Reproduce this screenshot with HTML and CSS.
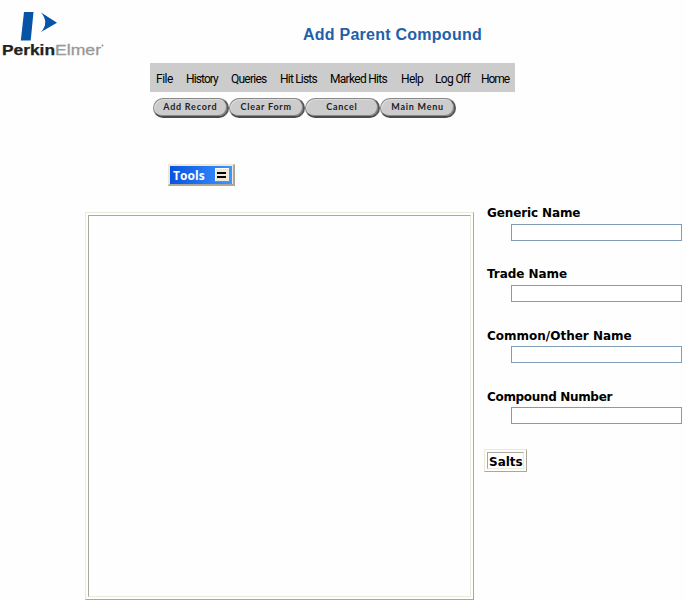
FILE: index.html
```html
<!DOCTYPE html>
<html lang="en">
<head>
<meta charset="utf-8">
<title>Add Parent Compound</title>
<link rel="stylesheet" href="styles.css">
</head>
<body>
<header class="header">
  <svg class="logo" width="110" height="62" viewBox="0 0 110 62" role="img" aria-label="PerkinElmer">
    <path d="M24 12H33.5L30.7 40.5H20.8Z" fill="#0754a6"/>
    <path d="M41 12.5L57 22.8L41 32Q49.5 22.5 41 12.5Z" fill="#0754a6"/>
    <text class="logo-name" x="2" y="54.5" textLength="53" lengthAdjust="spacingAndGlyphs">Perkin</text>
    <text class="logo-name logo-light" x="55" y="54.5" textLength="46" lengthAdjust="spacingAndGlyphs">Elmer</text>
    <circle cx="102.5" cy="45.5" r=".9" fill="#888"/>
  </svg>
  <h1 class="title">Add Parent Compound</h1>
</header>
<nav class="menu">
  <a class="w-file">File</a><a class="w-history">History</a><a class="w-queries">Queries</a><a class="w-lists">Hit Lists</a><a class="w-marked">Marked Hits</a><a class="w-help">Help</a><a class="w-log">Log Off</a><a class="w-home">Home</a>
</nav>
<div class="actions">
  <button>Add Record</button><button>Clear Form</button><button>Cancel</button><button>Main Menu</button>
</div>
<div class="tools"><span class="tools-face"><span class="tools-label">Tools</span><svg class="tools-icon" width="16" height="14" viewBox="0 0 16 14" shape-rendering="crispEdges"><path d="M0 0H15V14H0Z" fill="#8d897a"/><path d="M0 0H14V13H0Z" fill="#fff"/><path d="M1 1H14V13H1Z" fill="#ece9d8"/><path d="M2 4H11V6H2ZM2 8H11V10H2Z" fill="#000"/></svg></span></div>
<main class="content">
  <div class="frame structure"><div class="frame-inner"></div></div>
  <form class="fields">
    <label class="field generic"><span>Generic Name</span><input type="text"></label>
    <label class="field trade"><span>Trade Name</span><input type="text"></label>
    <label class="field common"><span>Common/Other Name</span><input type="text"></label>
    <label class="field number"><span>Compound Number</span><input type="text"></label>
    <div class="frame salts"><div class="frame-inner">Salts</div></div>
  </form>
</main>
</body>
</html>
```
FILE: styles.css
```css
* { box-sizing: border-box; }
body { margin: 0; height: 601px; overflow: hidden; background: #fefefe; color: #000; font-family: "DejaVu Sans", sans-serif; }
.header { display: flex; height: 63px; }
.logo { display: block; flex: none; }
.logo-name { font: bold 14px "Liberation Sans", sans-serif; fill: #222; stroke: #222; stroke-width: .25; }
.logo-light { font-weight: normal; fill: #999; stroke: #999; stroke-width: .3; }
.title { margin: 25px 0 0 193px; font: bold 16px/20px "Liberation Sans", sans-serif; letter-spacing: .25px; color: #2260aa; white-space: nowrap; }
.menu { display: flex; width: 365px; height: 29px; margin-left: 150px; padding-left: 6px; background: #ccc; font: 12px/32px Roboto, sans-serif; white-space: nowrap; }
.menu a { flex: none; }
.w-file { width: 30px; letter-spacing: -.5px; }
.w-history { width: 45px; letter-spacing: -.9px; }
.w-queries { width: 49px; letter-spacing: -.75px; }
.w-lists { width: 50px; letter-spacing: -.8px; }
.w-marked { width: 71px; letter-spacing: -.7px; }
.w-help { width: 34px; letter-spacing: -.6px; }
.w-log { width: 46px; letter-spacing: -.65px; }
.w-home { width: 30px; letter-spacing: -1.1px; }
.actions { display: flex; width: 303px; margin: 6px 0 0 153px; }
.actions button { flex: 1; height: 20px; padding: 0 0 1px; border: 1px solid #888; border-right: 2px solid #555; border-bottom: 2px solid #4b4b4b; border-radius: 10px; background: #ccc; box-shadow: inset -1px -1px 0 #888, inset 1px 1px 0 #ddd; color: #222; font: bold 9px/14px Lato, sans-serif; letter-spacing: .75px; white-space: nowrap; }
.tools { width: 67px; height: 22px; margin: 46px 0 0 168px; padding: 1px; border: 1px solid #ece9d8; border-right: 2px solid #aca899; border-bottom: 2px solid #aca899; background: #ece9d8; }
.tools-face { display: flex; align-items: center; justify-content: space-between; width: 62px; height: 18px; padding: 0 1px 0 3px; background: linear-gradient(90deg, #0753df, #3f94ff); }
.tools-label { color: #fff; font: bold 12px/18px "Open Sans", sans-serif; letter-spacing: .1px; padding-top: 2px; }
.tools-icon { display: block; }
.content { display: flex; margin-top: 26px; padding-left: 85px; }
.frame { padding: 2px; border: 1px solid #ece9d8; border-right-color: #aca899; border-bottom-color: #aca899; }
.frame-inner { height: 100%; border: 1px solid #aca899; border-right-color: #ece9d8; border-bottom-color: #ece9d8; }
.structure { flex: none; width: 389px; height: 388px; }
.fields { width: 198px; margin-left: 10px; font-weight: bold; font-size: 12px; }
.field { display: block; height: 61px; margin-left: 3px; padding-top: 1px; }
.field span { display: block; height: 11px; line-height: 1px; }
.generic span { letter-spacing: -.12px; }
.trade span { letter-spacing: -.05px; }
.number span { letter-spacing: -.33px; }
.common span, .number span { line-height: 2px; }
.field input { display: block; width: 171px; height: 17px; margin-left: 24px; border: 1px solid #7f9db9; padding: 0 2px; background: #fff; }
.salts { width: 43px; height: 23px; margin-top: -7px; }
.salts .frame-inner { padding-left: 1px; line-height: 18px; }
```
